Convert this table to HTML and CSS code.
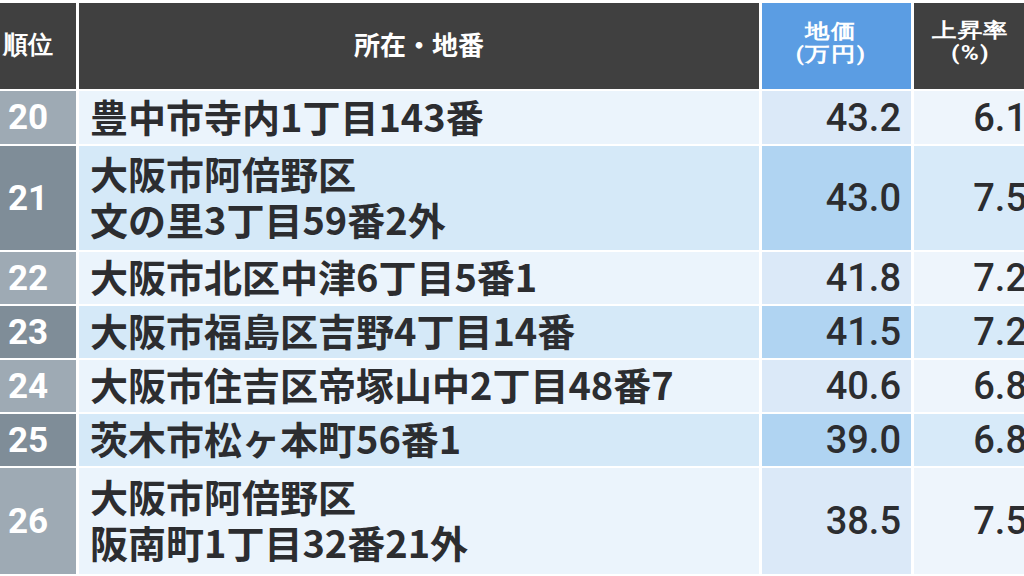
FILE: index.html
```html
<!DOCTYPE html>
<html lang="ja">
<head>
<meta charset="utf-8">
<title>地価ランキング</title>
<link rel="stylesheet" href="styles.css">
</head>
<body>
<div class="table">
  <div class="row head">
    <div class="cell rank">順位</div>
    <div class="cell addr">所在・地番</div>
    <div class="cell price"><span class="two">地価<br>(万円)</span></div>
    <div class="cell rate"><span class="two">上昇率<br>(%)</span></div>
  </div>
  <div class="row even">
    <div class="cell rank">20</div>
    <div class="cell addr">豊中市寺内1丁目143番</div>
    <div class="cell price">43.2</div>
    <div class="cell rate">6.1</div>
  </div>
  <div class="row odd">
    <div class="cell rank">21</div>
    <div class="cell addr">大阪市阿倍野区<br>文の里3丁目59番2外</div>
    <div class="cell price">43.0</div>
    <div class="cell rate">7.5</div>
  </div>
  <div class="row even">
    <div class="cell rank">22</div>
    <div class="cell addr">大阪市北区中津6丁目5番1</div>
    <div class="cell price">41.8</div>
    <div class="cell rate">7.2</div>
  </div>
  <div class="row odd">
    <div class="cell rank">23</div>
    <div class="cell addr">大阪市福島区吉野4丁目14番</div>
    <div class="cell price">41.5</div>
    <div class="cell rate">7.2</div>
  </div>
  <div class="row even">
    <div class="cell rank">24</div>
    <div class="cell addr">大阪市住吉区帝塚山中2丁目48番7</div>
    <div class="cell price">40.6</div>
    <div class="cell rate">6.8</div>
  </div>
  <div class="row odd">
    <div class="cell rank">25</div>
    <div class="cell addr">茨木市松ヶ本町56番1</div>
    <div class="cell price">39.0</div>
    <div class="cell rate">6.8</div>
  </div>
  <div class="row even">
    <div class="cell rank">26</div>
    <div class="cell addr">大阪市阿倍野区<br>阪南町1丁目32番21外</div>
    <div class="cell price">38.5</div>
    <div class="cell rate">7.5</div>
  </div>
</div>
</body>
</html>
```
FILE: styles.css
```css
html, body {
  margin: 0;
  padding: 0;
  width: 1024px;
  height: 576px;
  overflow: hidden;
  background: #ffffff;
}

.table {
  display: grid;
  grid-template-columns: 96px 680px 149px 123px;
  grid-template-rows: 86px 53px 104px 52px 52px 52px 52px 106px;
  column-gap: 3px;
  row-gap: 2px;
  margin-top: 3px;
  margin-left: -20px;
  font-family: "Noto Sans CJK JP", "Noto Sans", sans-serif;
  color: #2c2d30;
}

.row {
  display: contents;
}

.cell {
  display: flex;
  align-items: center;
  white-space: nowrap;
}

/* header */
.head .cell {
  background: #404040;
  color: #ffffff;
  font-weight: 700;
  justify-content: center;
  text-align: center;
  font-size: 25px;
  line-height: 28px;
}
.head .rank { font-size: 25px; padding-bottom: 2px; }
.head .addr { font-size: 26px; padding: 0 0 4px 0; }
.head .price { background: #5b9de3; padding-bottom: 6px; }
.head .rate { padding-bottom: 8px; }
.two {
  display: block;
  font-size: 20px;
  line-height: 23px;
  letter-spacing: 1px;
  transform: scaleX(1.22);
}

/* body cells */
.rank {
  justify-content: center;
  color: #ffffff;
  font-family: Roboto, "Noto Sans", sans-serif;
  font-weight: 700;
  font-size: 35px;
}
.addr {
  padding-left: 11px;
  font-size: 38px;
  font-weight: 700;
  line-height: 46px;
  padding-bottom: 4px;
}
.price, .rate {
  justify-content: flex-end;
  padding-right: 10px;
  font-family: Roboto, "Noto Sans", sans-serif;
  font-weight: 500;
  font-size: 38px;
}

.even .rank { background: #9eaab4; }
.odd .rank { background: #7f8d98; }
.even .addr { background: #ebf4fc; }
.odd .addr { background: #d5e9f8; }
.even .price { background: #dbe9f8; }
.odd .price { background: #b0d4f2; }
.even .rate { background: #eef5fc; }
.odd .rate { background: #d7eaf9; }
```
